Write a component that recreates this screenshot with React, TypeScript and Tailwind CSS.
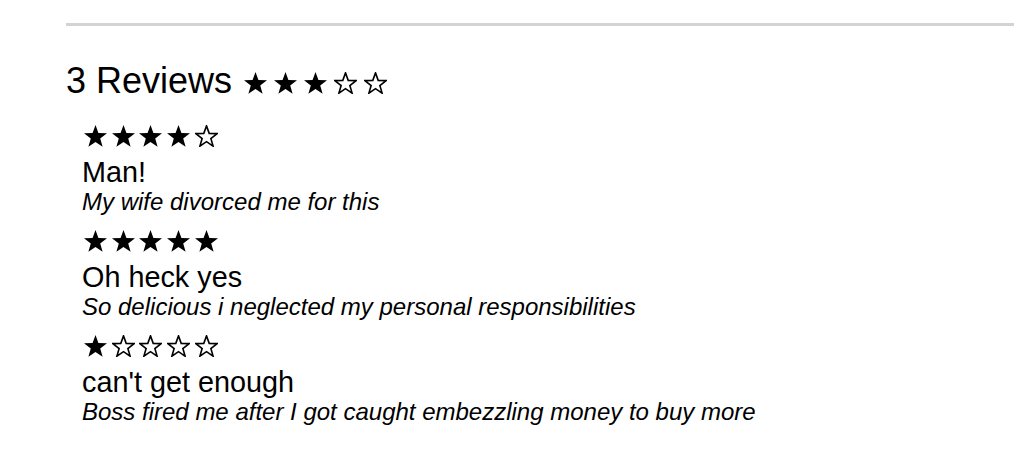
const reviews = [
  { rating: 4, title: "Man!", body: "My wife divorced me for this" },
  { rating: 5, title: "Oh heck yes", body: "So delicious i neglected my personal responsibilities" },
  { rating: 1, title: "can't get enough", body: "Boss fired me after I got caught embezzling money to buy more" },
]

// five point star, centred in a 23x22 box
const starPoints = (R: number) => {
  const cx = 11.5
  const cy = 12.09
  const r = R * 0.41
  const pts: string[] = []
  for (let i = 0; i < 10; i++) {
    const rad = i % 2 === 0 ? R : r
    const a = (Math.PI / 5) * i - Math.PI / 2
    pts.push(`${(cx + rad * Math.cos(a)).toFixed(2)},${(cy + rad * Math.sin(a)).toFixed(2)}`)
  }
  return pts.join(" ")
}

const Star = ({ filled }: { filled: boolean }) => (
  <svg width="23" height="22" viewBox="0 0 23 22" className="shrink-0">
    {filled ? (
      <polygon points={starPoints(12.09)} fill="#000" />
    ) : (
      <polygon points={starPoints(11.2)} fill="none" stroke="#000" strokeWidth="1.6" strokeLinejoin="miter" />
    )}
  </svg>
)

const Stars = ({ rating, gap }: { rating: number; gap: string }) => (
  <div className={`flex items-center ${gap}`}>
    {[1, 2, 3, 4, 5].map((n) => (
      <Star key={n} filled={n <= rating} />
    ))}
  </div>
)

export default function App() {
  return (
    <div className="w-full min-h-screen bg-white text-black pl-[66px] pt-[23px]" style={{ fontFamily: '"Liberation Sans", Arial, sans-serif' }}>
      <div className="h-[3px] w-full bg-[#d3d3d3]" />
      <div className="flex items-center mt-[35px] h-[40px]">
        <h2 className="text-[36px] leading-[40px] font-normal">3 Reviews</h2>
        <div className="ml-[12px] mt-[3px]">
          <Stars rating={3} gap="gap-[7px]" />
        </div>
      </div>
      <div className="mt-[19px] pl-[16px] flex flex-col gap-[9px]">
        {reviews.map((r) => (
          <div key={r.title} className="flex flex-col">
            <div className="h-[32px] mb-[4px] flex items-center pl-[2px]">
              <Stars rating={r.rating} gap="gap-[4.7px]" />
            </div>
            <div className="text-[28.8px] leading-[32px]">{r.title}</div>
            <div className="text-[24px] leading-[28px] italic">{r.body}</div>
          </div>
        ))}
      </div>
    </div>
  )
}
